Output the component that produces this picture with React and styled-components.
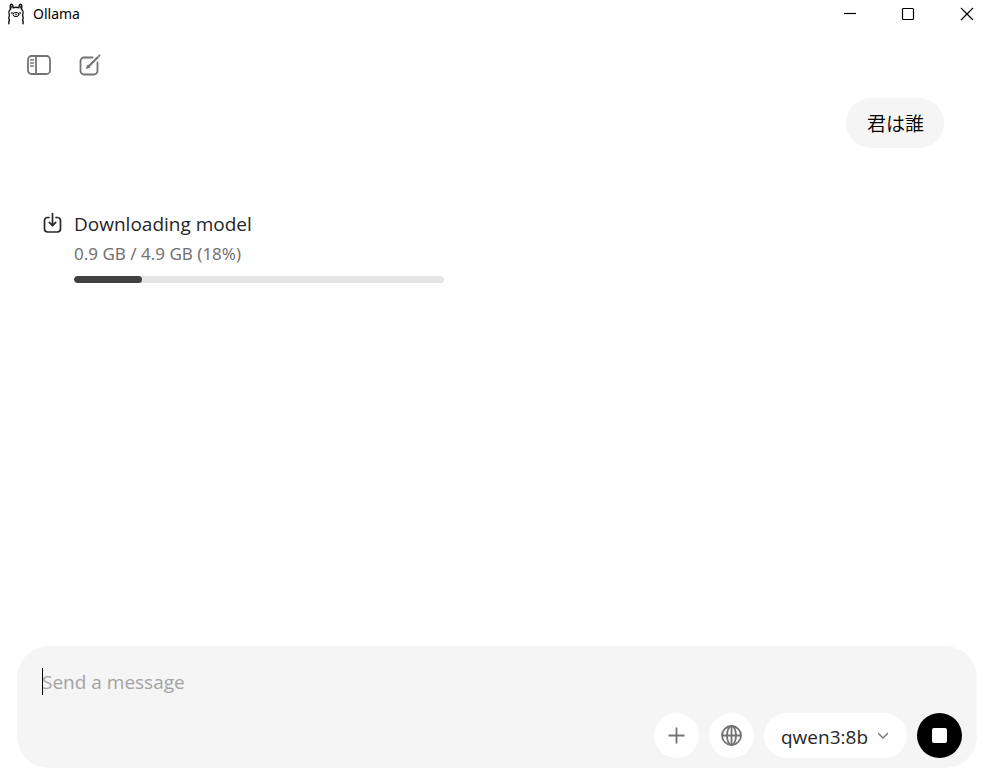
import React, { useState } from "react";
import styled, { createGlobalStyle } from "styled-components";

const download = { done: 0.9, total: 4.9 };
const models = ["qwen3:8b"];

export default function App() {
  const [message, setMessage] = useState("");
  const [model, setModel] = useState(models[0]);
  const percent = (download.done / download.total) * 100;

  return (
    <>
      <GlobalStyle />
      <StyledWindow>
        <StyledTitleBar>
          <LlamaIcon />
          <StyledTitle>Ollama</StyledTitle>
          <StyledCaption aria-label="Minimize">
            <svg width="14" height="14" viewBox="0 0 14 14">
              <path d="M1 6.5h12" />
            </svg>
          </StyledCaption>
          <StyledCaption aria-label="Maximize">
            <svg width="14" height="14" viewBox="0 0 14 14">
              <rect x="1.5" y="1.5" width="11" height="11" rx="1" />
            </svg>
          </StyledCaption>
          <StyledCaption aria-label="Close">
            <svg width="14" height="14" viewBox="0 0 14 14">
              <path d="M1 1l12 12M13 1L1 13" />
            </svg>
          </StyledCaption>
        </StyledTitleBar>

        <StyledToolbar>
          <StyledToolButton aria-label="Toggle sidebar">
            <SidebarIcon />
          </StyledToolButton>
          <StyledToolButton aria-label="New chat">
            <ComposeIcon />
          </StyledToolButton>
        </StyledToolbar>

        <StyledChat>
          <StyledBubble>君は誰</StyledBubble>
          <StyledDownload>
            <DownloadIcon />
            <StyledDownloadBody>
              <StyledDownloadTitle>Downloading model</StyledDownloadTitle>
              <StyledDownloadSize>
                {`${download.done} GB / ${download.total} GB (${Math.round(percent)}%)`}
              </StyledDownloadSize>
              <StyledTrack
                role="progressbar"
                aria-label="Downloading model"
                aria-valuenow={Math.round(percent)}
              >
                <StyledFill style={{ width: `${percent}%` }} />
              </StyledTrack>
            </StyledDownloadBody>
          </StyledDownload>
        </StyledChat>

        <StyledComposer onSubmit={(e) => e.preventDefault()}>
          <StyledField>
            {!message && <StyledCaret />}
            <StyledInput
              rows={1}
              aria-label="Message"
              placeholder="Send a message"
              value={message}
              onChange={(e) => setMessage(e.target.value)}
            />
          </StyledField>
          <StyledActions>
            <StyledRound type="button" aria-label="Add attachment">
              <svg width="17" height="17" viewBox="0 0 17 17">
                <path d="M8.5 .5v16M.5 8.500h16" />
              </svg>
            </StyledRound>
            <StyledRound type="button" aria-label="Web search">
              <GlobeIcon />
            </StyledRound>
            <StyledPicker>
              <StyledSelect
                aria-label="Model"
                value={model}
                onChange={(e) => setModel(e.target.value)}
              >
                {models.map((name) => (
                  <option key={name}>{name}</option>
                ))}
              </StyledSelect>
              <StyledChevron width="12" height="8" viewBox="0 0 12 8">
                <path d="M1.5 1.5L6 6l4.500-4.500" />
              </StyledChevron>
            </StyledPicker>
            <StyledRound type="button" $dark aria-label="Stop">
              <StyledStop />
            </StyledRound>
          </StyledActions>
        </StyledComposer>
      </StyledWindow>
    </>
  );
}

function LlamaIcon() {
  return (
    <svg
      width="18"
      height="22"
      viewBox="0 0 18 22"
      fill="none"
      stroke="#111"
      strokeWidth="1.4"
      strokeLinecap="round"
      strokeLinejoin="round"
    >
      <path d="M3.500 6.300C3 3.600 3.200 1.400 4.200 1.300c1 0 1.800 1.500 2 3.500 1.700-.6 3.900-.6 5.600 0 .2-2 1-3.500 2-3.500 1 .1 1.200 2.300.7 5" />
      <path d="M4.700 3.500v1.500M13.300 3.500v1.500" strokeWidth="1" />
      <path d="M3.500 6.300C1.800 7.600 1.500 10.200 2.500 12c-.8 1.700-.9 3.400-.1 4.900-.6 1.300-.7 2.800-.4 3.900M14.500 6.300c1.700 1.300 2 3.900 1 5.700.8 1.700.9 3.400.1 4.900.6 1.300.7 2.800.4 3.900" />
      <ellipse cx="9" cy="11.500" rx="2.900" ry="2.200" strokeWidth="1" />
      <path d="M8.300 11.100l.7.500.7-.5M9 11.600v.6" strokeWidth=".8" />
      <path d="M4.600 10h.6M12.800 10h.6" strokeWidth="1.500" />
    </svg>
  );
}

function SidebarIcon() {
  return (
    <svg width="26" height="22" viewBox="0 0 26 22">
      <rect x="2" y="2" width="22" height="18" rx="3.500" />
      <path d="M10 2v18" />
      <path d="M4.500 6h3M4.500 9h3M4.500 12h3" strokeWidth="1.300" />
    </svg>
  );
}

function ComposeIcon() {
  return (
    <svg width="24" height="24" viewBox="0 0 24 24">
      <path d="M14.500 4.500H6A3.500 3.500 0 0 0 2.500 8v10A3.500 3.500 0 0 0 6 21.500h10a3.500 3.500 0 0 0 3.500-3.500V9.500" />
      <path d="M10.500 13.500l9-9" strokeWidth="2.200" />
      <path d="M9 15l1-2.200 1.200 1.200zM21 3l.5-.5" />
    </svg>
  );
}

function DownloadIcon() {
  return (
    <svg
      width="20"
      height="26"
      viewBox="0 0 20 26"
      fill="none"
      stroke="#262626"
      strokeWidth="1.700"
      strokeLinecap="round"
      strokeLinejoin="round"
    >
      <path d="M6 7.500H4.500a3 3 0 0 0-3 3v8.300a3.200 3.200 0 0 0 3.200 3.200h9.600a3.200 3.200 0 0 0 3.200-3.200v-8.300a3 3 0 0 0-3-3H13" />
      <path d="M9.500 3.500v12M6.300 12.400l3.200 3.200 3.200-3.200" />
    </svg>
  );
}

function GlobeIcon() {
  return (
    <svg width="23" height="23" viewBox="0 0 23 23">
      <circle cx="11.500" cy="11.500" r="9.500" />
      <ellipse cx="11.500" cy="11.500" rx="4.500" ry="9.500" />
      <path d="M11.500 2v19M2 11.500h19" />
    </svg>
  );
}

const GlobalStyle = createGlobalStyle`
  * {
    box-sizing: border-box;
  }
  body {
    margin: 0;
    background: #fff;
  }
  body, button, textarea, select {
    font-family: "Open Sans", "Noto Sans CJK JP", sans-serif;
  }
  button {
    border: none;
    padding: 0;
    background: none;
    cursor: pointer;
  }
  svg {
    flex: none;
  }
`;

const StyledWindow = styled.div`
  display: flex;
  flex-direction: column;
  min-height: 100vh;
  padding-bottom: 7px;
`;

const StyledTitleBar = styled.header`
  display: flex;
  align-items: center;
  height: 28px;
  padding-left: 7px;
`;

const StyledTitle = styled.span`
  flex: 1;
  margin-left: 8px;
  font-family: "Noto Sans", sans-serif;
  font-size: 14px;
  line-height: 28px;
  color: #000;
`;

const StyledCaption = styled.button`
  display: flex;
  align-items: center;
  justify-content: center;
  width: 58px;
  height: 28px;
  &:last-child {
    width: 53px;
    padding-left: 7px;
  }
  svg {
    fill: none;
    stroke: #000;
    stroke-width: 1.2;
  }
`;

const StyledToolbar = styled.nav`
  display: flex;
  align-items: center;
  gap: 26px;
  height: 70px;
  padding: 4px 26px 0;
`;

const StyledToolButton = styled.button`
  display: flex;
  svg {
    fill: none;
    stroke: #737373;
    stroke-width: 1.8;
    stroke-linecap: round;
    stroke-linejoin: round;
  }
`;

const StyledChat = styled.main`
  display: flex;
  flex: 1;
  flex-direction: column;
  padding: 0 46px 0 43px;
`;

const StyledBubble = styled.div`
  align-self: flex-end;
  padding: 11px 20px 11px 21px;
  border-radius: 25px;
  background: #f5f5f5;
  color: #000;
  font-family: "Noto Sans CJK JP", sans-serif;
  font-size: 19px;
  font-weight: 350;
  line-height: 28px;
`;

const StyledDownload = styled.section`
  display: flex;
  align-items: flex-start;
  gap: 11px;
  margin-top: 62px;
`;

const StyledDownloadBody = styled.div`
  flex: 0 1 370px;
`;

const StyledDownloadTitle = styled.div`
  font-size: 19px;
  line-height: 28px;
  color: #262626;
`;

const StyledDownloadSize = styled.div`
  margin-top: 4px;
  font-family: "Noto Sans", sans-serif;
  font-size: 17px;
  line-height: 24px;
  color: #737373;
`;

const StyledTrack = styled.div`
  height: 7px;
  margin-top: 10px;
  border-radius: 4px;
  background: #e5e5e5;
  overflow: hidden;
`;

const StyledFill = styled.div`
  height: 100%;
  border-radius: 4px;
  background: #404040;
`;

const StyledComposer = styled.form`
  display: flex;
  flex-direction: column;
  justify-content: space-between;
  gap: 16px;
  margin: 0 13px 0 17px;
  padding: 22px 15px 10px 25px;
  border-radius: 32px;
  background: #f5f5f5;
`;

const StyledField = styled.div`
  position: relative;
  display: flex;
`;

const StyledCaret = styled.span`
  position: absolute;
  top: 0;
  left: 0;
  width: 1px;
  height: 27px;
  background: #000;
`;

const StyledInput = styled.textarea`
  flex: 1;
  height: 29px;
  padding: 0;
  border: none;
  outline: none;
  resize: none;
  background: transparent;
  font-size: 19px;
  line-height: 29px;
  color: #262626;
  &::placeholder {
    color: #a3a3a3;
  }
`;

const StyledActions = styled.div`
  display: flex;
  justify-content: flex-end;
  gap: 10px;
`;

const StyledRound = styled.button`
  display: flex;
  align-items: center;
  justify-content: center;
  width: 45px;
  height: 45px;
  border-radius: 50%;
  background: ${({ $dark }) => ($dark ? "#000" : "#fff")};
  svg {
    fill: none;
    stroke: #737373;
    stroke-width: 1.8;
  }
`;

const StyledPicker = styled.div`
  position: relative;
  display: flex;
  align-items: center;
`;

const StyledSelect = styled.select`
  appearance: none;
  height: 45px;
  padding: 2px 38px 0 17px;
  border: none;
  border-radius: 23px;
  outline: none;
  background: #fff;
  font-size: 19px;
  color: #262626;
`;

const StyledChevron = styled.svg`
  position: absolute;
  right: 18px;
  fill: none;
  stroke: #737373;
  stroke-width: 1.3;
  stroke-linecap: round;
  pointer-events: none;
`;

const StyledStop = styled.span`
  width: 15px;
  height: 15px;
  border-radius: 2px;
  background: #fff;
`;
